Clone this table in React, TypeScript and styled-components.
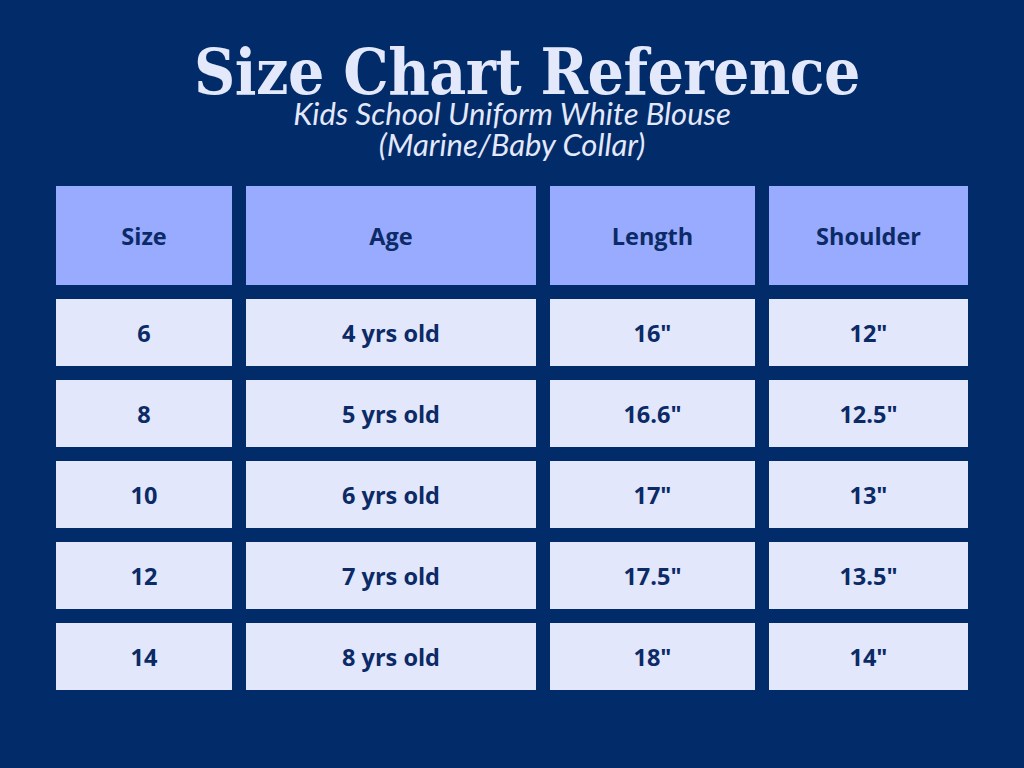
import React from "react";
import styled, { createGlobalStyle } from "styled-components";

const Global = createGlobalStyle`
  html, body { margin: 0; padding: 0; background: #022b69; }
  #root { width: 1024px; height: 768px; }
`;

const Page = styled.div`
  width: 1024px;
  height: 768px;
  box-sizing: border-box;
  background: #022b69;
  display: flex;
  flex-direction: column;
  align-items: center;
  padding-top: 47px;
`;

const Title = styled.h1`
  margin: 0 0 0 30px;
  font-family: "DejaVu Serif Condensed", "DejaVu Serif", serif;
  font-stretch: condensed;
  font-weight: 700;
  font-size: 63.5px;
  line-height: 50px;
  color: #e3e8fb;
  letter-spacing: -0.5px;
`;

const Subtitle = styled.p`
  margin: 1px 0 0 0;
  font-family: Lato, "Open Sans", sans-serif;
  font-style: italic;
  font-size: 31px;
  line-height: 31px;
  color: #e3e8fb;
  text-align: center;
`;

const Table = styled.div`
  margin-top: 26px;
  display: grid;
  grid-template-columns: 176px 290px 205px 199px;
  grid-template-rows: 99px repeat(5, 67px);
  column-gap: 14px;
  row-gap: 14px;
`;

const Cell = styled.div<{ $head?: boolean }>`
  display: flex;
  align-items: center;
  justify-content: center;
  background: ${(p) => (p.$head ? "#99abff" : "#e2e7fb")};
  color: #0b2a66;
  font-family: "Open Sans", sans-serif;
  font-weight: 700;
  font-size: 23.5px;
`;

const headers = ["Size", "Age", "Length", "Shoulder"];
const rows = [
  ["6", "4 yrs old", '16"', '12"'],
  ["8", "5 yrs old", '16.6"', '12.5"'],
  ["10", "6 yrs old", '17"', '13"'],
  ["12", "7 yrs old", '17.5"', '13.5"'],
  ["14", "8 yrs old", '18"', '14"'],
];

export default function App() {
  return (
    <>
      <Global />
      <Page>
        <Title>Size Chart Reference</Title>
        <Subtitle>
          Kids School Uniform White Blouse
          <br />
          (Marine/Baby Collar)
        </Subtitle>
        <Table>
          {headers.map((h) => (
            <Cell key={h} $head>
              {h}
            </Cell>
          ))}
          {rows.map((r, i) =>
            r.map((c, j) => <Cell key={`${i}-${j}`}>{c}</Cell>)
          )}
        </Table>
      </Page>
    </>
  );
}
